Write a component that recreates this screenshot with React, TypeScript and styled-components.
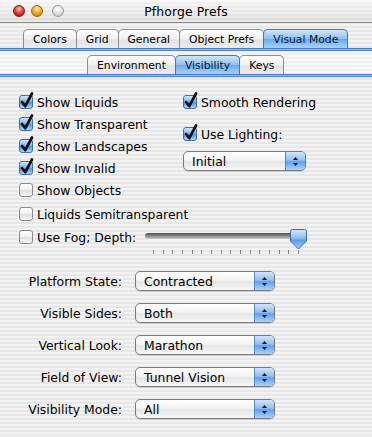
import { Fragment } from 'react';
import styled, { createGlobalStyle, css } from 'styled-components';

const GlobalStyle = createGlobalStyle`
  html, body {
    margin: 0;
    padding: 0;
  }
  body {
    font-family: 'DejaVu Sans', 'Liberation Sans', sans-serif;
    background: #ececec;
    color: #000;
  }
`;

const stripes = css`
  background: repeating-linear-gradient(
    to bottom,
    #f3f3f3 0px,
    #f3f3f3 2px,
    #e7e7e7 2px,
    #e7e7e7 4px
  );
`;

const Window = styled.div`
  width: 372px;
  height: 437px;
  overflow: hidden;
  ${stripes}
`;

const TitleBar = styled.div`
  height: 22px;
  display: grid;
  grid-template-columns: 1fr auto 1fr;
  align-items: center;
  border-bottom: 1px solid #8c8c8c;
  background: repeating-linear-gradient(
      to bottom,
      rgba(255, 255, 255, 0.35) 0px,
      rgba(255, 255, 255, 0.35) 2px,
      rgba(0, 0, 0, 0) 2px,
      rgba(0, 0, 0, 0) 4px
    ),
    linear-gradient(#f4f4f4, #dadada);
`;

const Lights = styled.div`
  display: flex;
  align-items: center;
  padding-left: 13px;
`;

const Light = styled.span<{ $color: 'red' | 'yellow' | 'gray'; $gap: number }>`
  width: 12px;
  height: 12px;
  border-radius: 50%;
  margin-right: ${(p) => p.$gap}px;
  box-sizing: border-box;
  ${(p) =>
    p.$color === 'red'
      ? css`
          background: radial-gradient(circle at 50% 30%, #ffd2c8 0, #f0584a 35%, #b8140e 80%, #8c0c08 100%);
          border: 1px solid #8b1d14;
        `
      : p.$color === 'yellow'
      ? css`
          background: radial-gradient(circle at 50% 30%, #fff4c0 0, #f7b22c 40%, #d07a06 85%, #a35f05 100%);
          border: 1px solid #9a6a10;
        `
      : css`
          background: radial-gradient(circle at 50% 30%, #ffffff 0, #e4e4e4 45%, #c4c4c4 90%);
          border: 1px solid #9c9c9c;
        `}
`;

const Title = styled.div`
  font-size: 12.4px;
  letter-spacing: 0.1px;
`;

const TabRow = styled.div<{ $indent: number; $top: number }>`
  display: flex;
  align-items: flex-end;
  padding-left: ${(p) => p.$indent}px;
  padding-top: ${(p) => p.$top}px;
`;

const Tab = styled.div<{ $active?: boolean }>`
  position: relative;
  height: 19px;
  box-sizing: border-box;
  padding: 0 9px;
  display: flex;
  align-items: center;
  font-size: 10.8px;
  border: 1px solid #8e8e8e;
  border-bottom: none;
  border-radius: 5px 5px 0 0;
  margin-right: -1px;
  background: linear-gradient(#fdfdfd, #f0f0f0 50%, #e3e3e3 55%, #ececec);
  ${(p) =>
    p.$active &&
    css`
      z-index: 1;
      border-color: #4a76b3;
      background: linear-gradient(#cfe6fb, #8ec2f1 48%, #6aaaec 52%, #a8d3f8);
      color: #0b1a33;
    `}
`;

const Rule = styled.div`
  height: 3px;
  background: linear-gradient(#4479c3 0, #4479c3 1px, #8cbdf0 1px, #8cbdf0 2px, #4f85ce 2px);
`;

const SubBand = styled.div`
  height: 23px;
  background: repeating-linear-gradient(
    to bottom,
    #fafafa 0px,
    #fafafa 2px,
    #efefef 2px,
    #efefef 4px
  );
`;

const Content = styled.div`
  padding: 14px 0 0 19px;
`;

const CheckGrid = styled.div`
  display: grid;
  grid-template-columns: 164px 1fr;
`;

const Column = styled.div`
  display: flex;
  flex-direction: column;
`;

const CheckRow = styled.label<{ $mt?: number }>`
  height: 22px;
  display: flex;
  align-items: center;
  gap: 4px;
  font-size: 12.4px;
  margin-top: ${(p) => p.$mt ?? 0}px;
  white-space: nowrap;
`;

const BoxWrap = styled.span`
  position: relative;
  width: 14px;
  height: 14px;
  flex: none;
`;

const Box = styled.span<{ $on: boolean }>`
  display: block;
  width: 14px;
  height: 14px;
  box-sizing: border-box;
  border-radius: 3px;
  ${(p) =>
    p.$on
      ? css`
          border: 1px solid #3f6eb0;
          background: linear-gradient(#d2eafd, #7db7ef 45%, #4f96e6 55%, #a9d6fb);
        `
      : css`
          border: 1px solid #8a8a8a;
          background: linear-gradient(#ffffff, #f2f2f2 45%, #e1e1e1 55%, #f7f7f7);
        `}
`;

const CheckMark = styled.svg`
  position: absolute;
  left: 0;
  top: -3px;
  overflow: visible;
`;

const Checkbox = ({ on, label, mt }: { on: boolean; label: string; mt?: number }) => (
  <CheckRow $mt={mt}>
    <BoxWrap>
      <Box $on={on} />
      {on && (
        <CheckMark width="16" height="17" viewBox="0 0 16 17">
          <path d="M3 10 L6.3 14.2 L13 1.5" fill="none" stroke="#111" strokeWidth="2.7" strokeLinecap="round" strokeLinejoin="round" />
        </CheckMark>
      )}
    </BoxWrap>
    {label}
  </CheckRow>
);

const PopupBox = styled.div<{ $w: number; $mt?: number }>`
  width: ${(p) => p.$w}px;
  height: 20px;
  margin-top: ${(p) => p.$mt ?? 0}px;
  box-sizing: border-box;
  border: 1px solid #7b7b7b;
  border-radius: 5px;
  background: linear-gradient(#ffffff, #f3f3f3 45%, #e4e4e4 55%, #f6f6f6);
  box-shadow: 0 1px 1px rgba(0, 0, 0, 0.12);
  display: flex;
  align-items: center;
  overflow: hidden;
`;

const PopupText = styled.span`
  flex: 1;
  padding-left: 8px;
  font-size: 12.4px;
  white-space: nowrap;
`;

const PopupArrows = styled.span`
  width: 19px;
  align-self: stretch;
  border-left: 1px solid #5b88c6;
  background: linear-gradient(#cfe6fb, #8ec2f1 45%, #5fa2ea 55%, #a9d4f9);
  display: flex;
  align-items: center;
  justify-content: center;
`;

const Popup = ({ value, width, mt }: { value: string; width: number; mt?: number }) => (
  <PopupBox $w={width} $mt={mt}>
    <PopupText>{value}</PopupText>
    <PopupArrows>
      <svg width="7" height="11" viewBox="0 0 7 11">
        <path d="M3.5 1 L6 4 L1 4 Z" fill="#111" />
        <path d="M3.5 10 L6 7 L1 7 Z" fill="#111" />
      </svg>
    </PopupArrows>
  </PopupBox>
);

const FogRow = styled.div`
  display: grid;
  grid-template-columns: 126px 161px;
  align-items: center;
  margin-top: 1px;
`;

const Slider = styled.div`
  position: relative;
  height: 22px;
`;

const Track = styled.div`
  position: absolute;
  left: 0;
  top: 7px;
  width: 160px;
  height: 6px;
  border-radius: 3px;
  background: linear-gradient(#4e4e4e, #8a8a8a 50%, #c9c9c9);
  box-shadow: 0 1px 0 rgba(255, 255, 255, 0.7);
`;

const Thumb = styled.svg`
  position: absolute;
  left: 145px;
  top: 3px;
`;

const Ticks = styled.div`
  position: absolute;
  left: 8px;
  top: 24px;
  width: 146px;
  height: 4px;
  display: flex;
  justify-content: space-between;
`;

const Tick = styled.span`
  width: 1px;
  height: 4px;
  background: #8a8a8a;
`;

const FormGrid = styled.div`
  display: grid;
  grid-template-columns: 103px 140px;
  column-gap: 13px;
  row-gap: 12px;
  align-items: center;
  margin-top: 23px;
`;

const FieldLabel = styled.span`
  text-align: right;
  font-size: 12.4px;
  white-space: nowrap;
`;

const fields: [string, string][] = [
  ['Platform State:', 'Contracted'],
  ['Visible Sides:', 'Both'],
  ['Vertical Look:', 'Marathon'],
  ['Field of View:', 'Tunnel Vision'],
  ['Visibility Mode:', 'All'],
];

const App = () => {
  return (
    <>
      <GlobalStyle />
      <Window>
        <TitleBar>
          <Lights>
            <Light $color="red" $gap={6} />
            <Light $color="yellow" $gap={9} />
            <Light $color="gray" $gap={0} />
          </Lights>
          <Title>Pfhorge Prefs</Title>
          <div />
        </TitleBar>
        <TabRow $indent={23} $top={6}>
          <Tab>Colors</Tab>
          <Tab>Grid</Tab>
          <Tab>General</Tab>
          <Tab>Object Prefs</Tab>
          <Tab $active>Visual Mode</Tab>
        </TabRow>
        <Rule />
        <SubBand>
          <TabRow $indent={87} $top={4}>
            <Tab>Environment</Tab>
            <Tab $active>Visibility</Tab>
            <Tab>Keys</Tab>
          </TabRow>
        </SubBand>
        <Rule />
        <Content>
          <CheckGrid>
            <Column>
              <Checkbox on label="Show Liquids" />
              <Checkbox on label="Show Transparent" />
              <Checkbox on label="Show Landscapes" />
              <Checkbox on label="Show Invalid" />
              <Checkbox on={false} label="Show Objects" />
            </Column>
            <Column>
              <Checkbox on label="Smooth Rendering" />
              <Checkbox on label="Use Lighting:" mt={10} />
              <Popup value="Initial" width={123} mt={6} />
            </Column>
          </CheckGrid>
          <Checkbox on={false} label="Liquids Semitransparent" mt={2} />
          <FogRow>
            <Checkbox on={false} label="Use Fog; Depth:" />
            <Slider>
              <Track />
              <Thumb width="17" height="21" viewBox="0 0 17 21">
                <defs>
                  <linearGradient id="thumbFill" x1="0" y1="0" x2="0" y2="1">
                    <stop offset="0" stopColor="#d4e9fc" />
                    <stop offset="0.45" stopColor="#86bdf0" />
                    <stop offset="0.55" stopColor="#5a9de8" />
                    <stop offset="1" stopColor="#a7d3fa" />
                  </linearGradient>
                </defs>
                <path
                  d="M2.5 0.5 H14.5 Q16.5 0.5 16.5 2.5 V12 L8.5 20 L0.5 12 V2.5 Q0.5 0.5 2.5 0.5 Z"
                  fill="url(#thumbFill)"
                  stroke="#3c68a8"
                />
              </Thumb>
              <Ticks>
                {Array.from({ length: 16 }).map((_, i) => (
                  <Tick key={i} />
                ))}
              </Ticks>
            </Slider>
          </FogRow>
          <FormGrid>
            {fields.map(([label, value]) => (
              <Fragment key={label}>
                <FieldLabel>{label}</FieldLabel>
                <Popup value={value} width={140} />
              </Fragment>
            ))}
          </FormGrid>
        </Content>
      </Window>
    </>
  );
};

export default App;
